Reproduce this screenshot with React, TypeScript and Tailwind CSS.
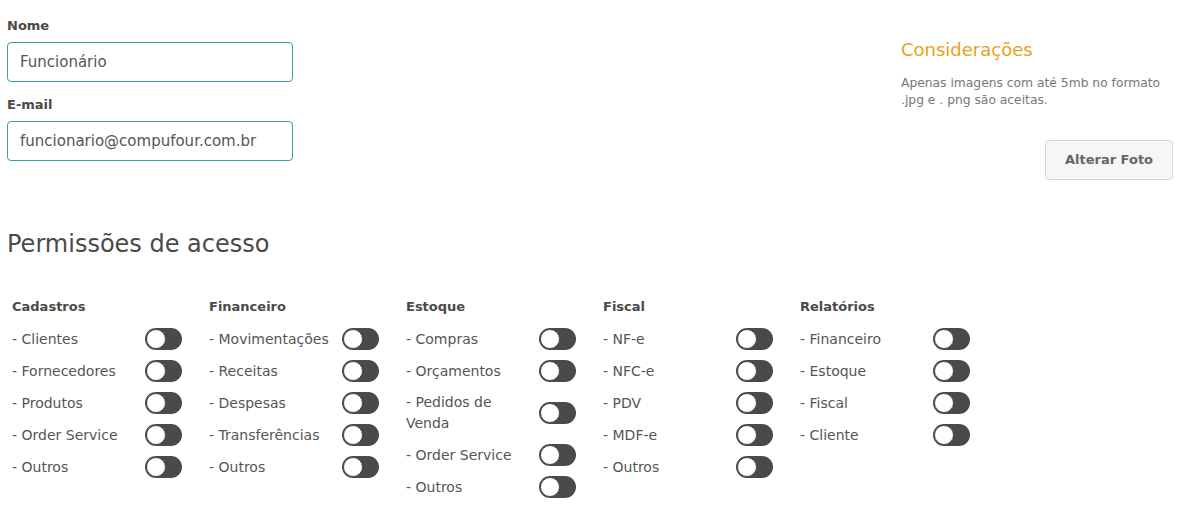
import { useState } from 'react';

const groups = [
  { title: 'Cadastros', items: ['Clientes', 'Fornecedores', 'Produtos', 'Order Service', 'Outros'] },
  { title: 'Financeiro', items: ['Movimentações', 'Receitas', 'Despesas', 'Transferências', 'Outros'] },
  { title: 'Estoque', items: ['Compras', 'Orçamentos', 'Pedidos de Venda', 'Order Service', 'Outros'] },
  { title: 'Fiscal', items: ['NF-e', 'NFC-e', 'PDV', 'MDF-e', 'Outros'] },
  { title: 'Relatórios', items: ['Financeiro', 'Estoque', 'Fiscal', 'Cliente'] },
];

const Toggle = () => {
  const [on, setOn] = useState(false);
  return (
    <button
      onClick={() => setOn(!on)}
      className={`shrink-0 w-[37px] h-[22px] rounded-full p-px flex items-center ${on ? 'bg-[#2a9d9d] justify-end' : 'bg-[#4a4a4a] justify-start'}`}
    >
      <span className="w-5 h-5 rounded-full bg-white border border-[#4a4a4a]" />
    </button>
  );
};

const App = () => {
  return (
    <div className="w-[1180px] h-[512px] bg-white font-[family-name:DejaVu_Sans,sans-serif] text-[#4a4a4a] overflow-hidden">
      <div className="flex justify-between px-[7px] pt-[17px]">
        <div className="w-[286px] flex flex-col">
          <label className="text-[13px] font-bold leading-[18px] text-[#4a4a4a]">Nome</label>
          <input
            defaultValue="Funcionário"
            className="mt-[7px] h-[40px] w-full rounded-[4px] border border-[#3aa0a0] px-3 text-[15px] text-[#555] outline-none"
          />
          <label className="mt-[14px] text-[13px] font-bold leading-[18px] text-[#4a4a4a]">E-mail</label>
          <input
            defaultValue="funcionario@compufour.com.br"
            className="mt-[7px] h-[40px] w-full rounded-[4px] border border-[#3aa0a0] px-3 text-[15px] text-[#555] outline-none"
          />
        </div>
        <div className="w-[272px] pt-[21px] flex flex-col">
          <h3 className="text-[18px] leading-6 text-[#e8a21c]">Considerações</h3>
          <p className="mt-[13px] pr-[8px] text-[12.3px] leading-[17px] text-[#777]">
            Apenas imagens com até 5mb no formato .jpg e . png são aceitas.
          </p>
          <div className="mt-[31px] flex justify-end">
            <button className="w-[128px] h-[40px] rounded-[4px] border border-[#d6d6d6] bg-[#f6f6f6] text-[13px] font-bold text-[#666]">
              Alterar Foto
            </button>
          </div>
        </div>
      </div>

      <h2 className="px-[7px] mt-[50px] text-[24px] leading-7 text-[#4a4a4a]">Permissões de acesso</h2>

      <div className="flex gap-[27px] px-[12px] mt-[40px]">
        {groups.map((g) => (
          <div key={g.title} className="w-[170px] flex flex-col">
            <h4 className="text-[13px] font-bold leading-[18px] text-[#4a4a4a]">{g.title}</h4>
            <div className="mt-[12px] flex flex-col gap-[10px]">
              {g.items.map((it) => (
                <div key={it} className="flex items-center justify-between">
                  <span className="w-[128px] text-[14px] leading-[21px] text-[#555]">- {it}</span>
                  <Toggle />
                </div>
              ))}
            </div>
          </div>
        ))}
      </div>
    </div>
  );
};

export default App;
